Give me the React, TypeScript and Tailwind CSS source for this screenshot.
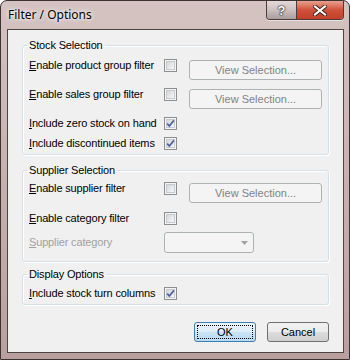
import React from "react"

const Check = ({ checked }: { checked?: boolean }) => (
  <span className="flex h-[13px] w-[13px] shrink-0 items-center justify-center border border-[#8e8f8f] bg-[#f4f4f4]">
    <span className="relative flex h-[9px] w-[9px] items-center justify-center border border-[#c5cad0] bg-gradient-to-br from-[#d3d7dc] to-[#f8f8f8]">
      {checked && (
        <svg width="9" height="9" viewBox="0 0 9 9" className="absolute left-[-1px] top-[-1px]">
          <path d="M1.2 4.6 L3.4 7 L7.9 1.4" fill="none" stroke="#4b5f9e" strokeWidth="1.7" />
        </svg>
      )}
    </span>
  </span>
)

const Label = ({ k, rest, gray }: { k: string; rest: string; gray?: boolean }) => (
  <span className={`flex h-[13px] w-[135px] shrink-0 items-center leading-[13px] tracking-[-0.15px] ${gray ? "text-[#a0a0a0]" : ""}`}>
    <span className="whitespace-pre">
      <span className="underline underline-offset-[1px]">{k}</span>
      {rest}
    </span>
  </span>
)

const ViewButton = ({ className }: { className?: string }) => (
  <span className={`flex h-[20px] w-[133px] items-center justify-center rounded-[3px] border border-[#adb2b5] bg-[#f4f4f4] text-[#838383] ${className ?? ""}`}>
    View Selection...
  </span>
)

const Group = ({ title, children, className }: { title: string; children: React.ReactNode; className?: string }) => (
  <fieldset className={`rounded-[3px] border border-[#d5dfe5] shadow-[inset_1px_1px_0_#fff,1px_1px_0_#fff] ${className ?? ""}`}>
    <legend className="ml-[4px] px-[2px] leading-[13px] tracking-[-0.15px]">{title}</legend>
    {children}
  </fieldset>
)

export default function App() {
  return (
    <div className="h-[360px] w-[350px] font-['Liberation_Sans',Arial,sans-serif] text-[11px] text-black">
      <div className="flex h-full w-full flex-col rounded-t-[7px] border border-[#3d3333] bg-gradient-to-b from-[#d4c3c1] via-[#c7b1af] to-[#b8a09e]">
        {/* title bar */}
        <div className="flex h-[28px] items-start justify-between">
          <span className="ml-[7px] mt-[6px] font-['Noto_Sans',sans-serif] text-[12px] leading-[16px] [text-shadow:0_0_6px_#fff,0_0_3px_#fff]">
            Filter / Options
          </span>
          <div className="mr-[5px] flex h-[19px] overflow-hidden rounded-b-[4px] border border-t-0 border-[#4a3c3c] shadow-[0_1px_0_rgba(255,255,255,0.5)]">
            <span className="flex w-[29px] items-center justify-center bg-gradient-to-b from-[#e3d9d8] via-[#cdc1c0] to-[#a99e9d] text-[13px] font-bold leading-none text-white [text-shadow:0_0_1px_#222,0_0_1px_#222,0_0_2px_#222]">
              ?
            </span>
            <span className="flex w-[47px] items-center justify-center border-l border-[#4a3c3c] bg-gradient-to-b from-[#e8a08e] via-[#d0503a] to-[#c2402a]">
              <svg width="14" height="11" viewBox="0 0 14 11">
                <path d="M2 1.5 L12 9.5 M12 1.5 L2 9.5" stroke="#3a1f1a" strokeWidth="4" strokeLinecap="square" />
                <path d="M2 1.5 L12 9.5 M12 1.5 L2 9.5" stroke="#fff" strokeWidth="2.2" strokeLinecap="square" />
              </svg>
            </span>
          </div>
        </div>

        {/* client area */}
        <div className="mb-[6px] ml-[6px] mr-[5px] flex flex-1 flex-col border border-[#4f4343] bg-[#f0f0f0] px-[14px] pt-[9px]">
          <Group title="Stock Selection">
            <div className="pb-[4px] pl-[6px] pt-[7px]">
              <div className="flex items-start">
                <Label k="E" rest="nable product group filter" />
                <Check />
                <ViewButton className="ml-[12px] mt-[1px]" />
              </div>
              <div className="mt-[8px] flex items-start">
                <Label k="E" rest="nable sales group filter" />
                <Check />
                <ViewButton className="ml-[12px] mt-[1px]" />
              </div>
              <div className="mt-[8px] flex items-start">
                <Label k="I" rest="nclude zero stock on hand" />
                <Check checked />
              </div>
              <div className="mt-[7px] flex items-start">
                <Label k="I" rest="nclude discontinued items" />
                <Check checked />
              </div>
            </div>
          </Group>

          <Group title="Supplier Selection" className="mt-[9px]">
            <div className="pb-[8px] pl-[6px] pt-[5px]">
              <div className="flex items-start">
                <Label k="E" rest="nable supplier filter" />
                <Check />
                <ViewButton className="ml-[12px] mt-[1px]" />
              </div>
              <div className="mt-[9px] flex items-start">
                <Label k="E" rest="nable category filter" />
                <Check />
              </div>
              <div className="mt-[7px] flex h-[21px] items-center">
                <Label k="S" rest="upplier category" gray />
                <span className="flex h-[21px] w-[90px] items-center justify-end rounded-[3px] border border-[#adb2b5] bg-[#f4f4f4] pr-[5px]">
                  <svg width="7" height="4" viewBox="0 0 7 4">
                    <path d="M0 0 H7 L3.5 4 Z" fill="#a2a2a2" />
                  </svg>
                </span>
              </div>
            </div>
          </Group>

          <Group title="Display Options" className="mt-[6px]">
            <div className="pb-[4px] pl-[6px] pt-[6px]">
              <div className="flex items-start">
                <Label k="I" rest="nclude stock turn columns" />
                <Check checked />
              </div>
            </div>
          </Group>

          <div className="mt-[17px] flex justify-end gap-[11px]">
            <span className="flex h-[20px] w-[62px] rounded-[3px] border border-[#3c7fb1] bg-[linear-gradient(#e9f3fb,#dcecf9_50%,#c9e3f6_50%,#b9daf2)] p-[2px]">
              <span className="flex flex-1 items-center justify-center border border-dotted border-black">OK</span>
            </span>
            <span className="flex h-[20px] w-[62px] items-center justify-center rounded-[3px] border border-[#707070] bg-[linear-gradient(#f2f2f2,#ebebeb_50%,#dddddd_50%,#cfcfcf)]">
              Cancel
            </span>
          </div>
        </div>
      </div>
    </div>
  )
}
